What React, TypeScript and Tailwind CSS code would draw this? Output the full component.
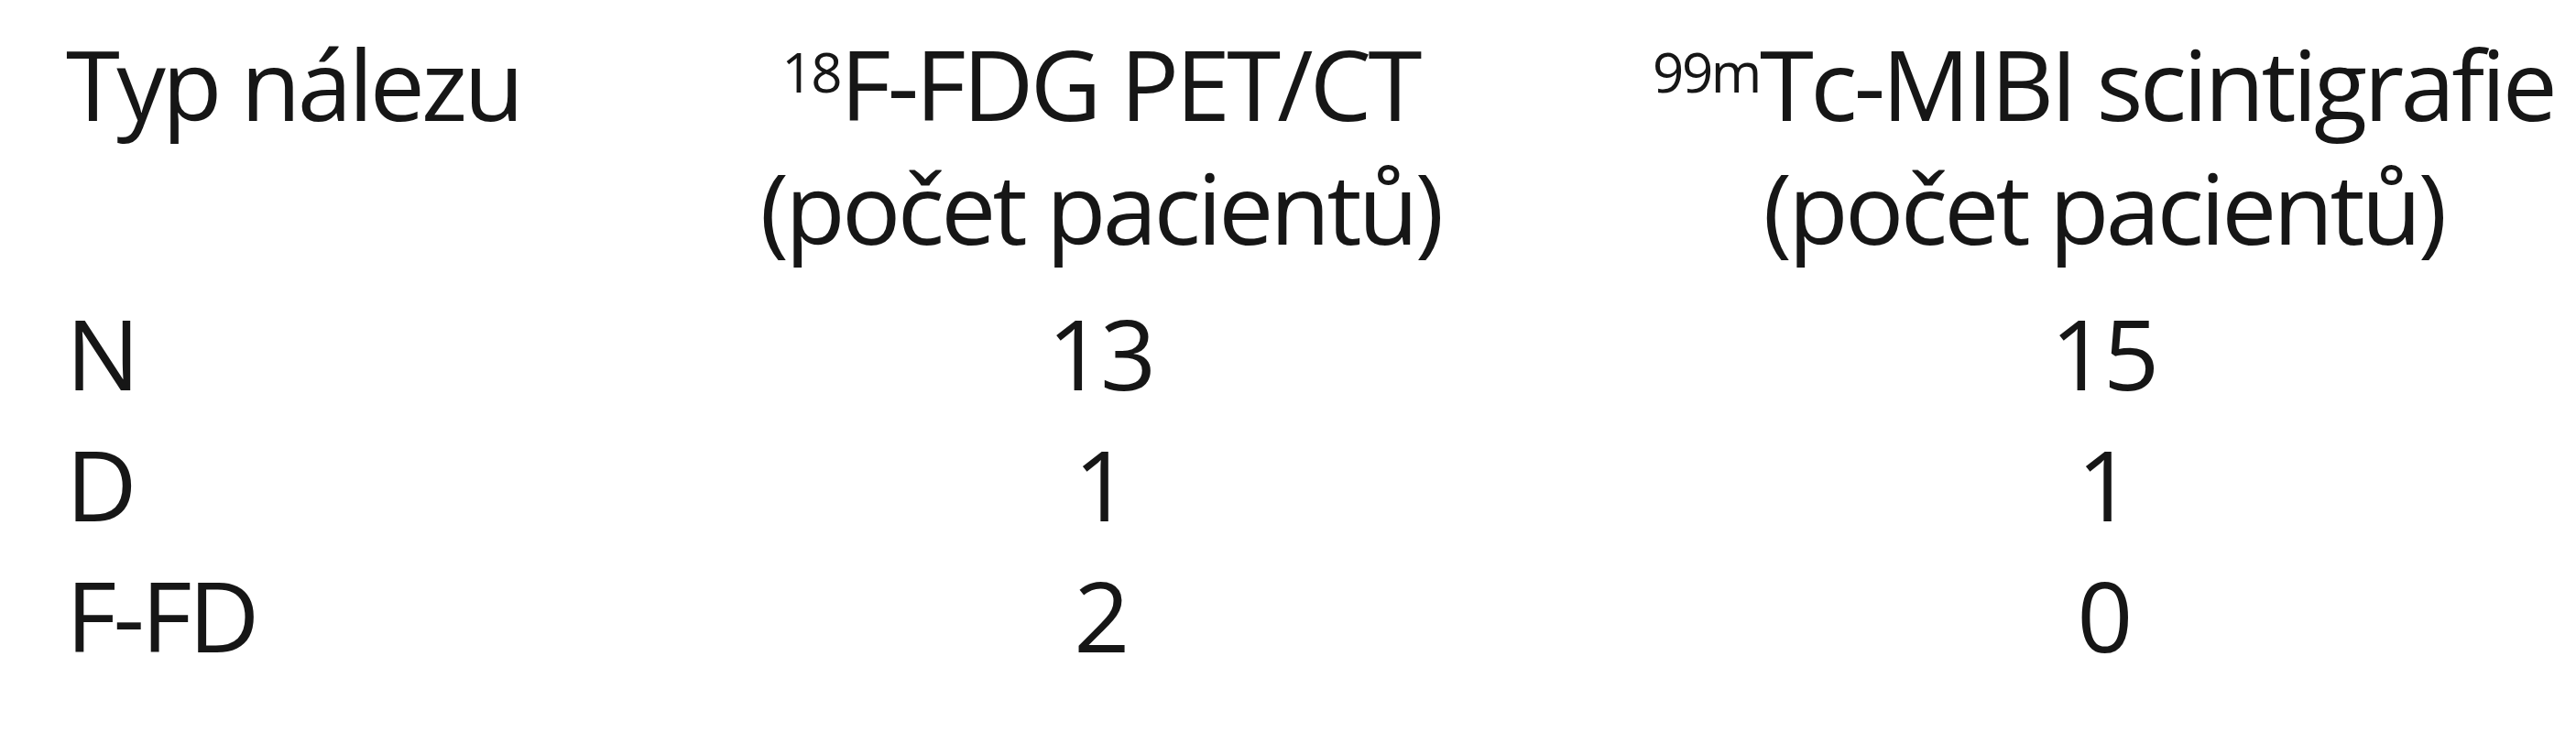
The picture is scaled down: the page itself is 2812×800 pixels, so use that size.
type Row = {
  label: string
  pet: string
  mibi: string
}

const rows: Row[] = [
  { label: 'N', pet: '13', mibi: '15' },
  { label: 'D', pet: '1', mibi: '1' },
  { label: 'F-FD', pet: '2', mibi: '0' },
]

const Sup = ({ children }: { children: string }) => (
  <span className="align-[31px] text-[60px] leading-none tracking-[-0.04em]">{children}</span>
)

export default function App() {
  return (
    <div className="h-[800px] w-[2812px] overflow-hidden bg-white font-['Open_Sans',sans-serif] text-[107px] tracking-[-0.035em] text-[#161616]">
      <div className="grid grid-cols-[544px_790px_1020px] gap-x-[190px] pl-[72px] pt-[23px]">
        <div className="leading-[135px]">Typ nálezu</div>
        <div className="text-center leading-[135px]">
          <div className="whitespace-nowrap">
            <Sup>18</Sup>F-FDG PET/CT
          </div>
          <div className="whitespace-nowrap">(počet pacientů)</div>
        </div>
        <div className="text-center leading-[135px]">
          <div className="whitespace-nowrap">
            <Sup>99m</Sup>Tc-MIBI scintigrafie
          </div>
          <div className="whitespace-nowrap">(počet pacientů)</div>
        </div>
      </div>

      <div className="mt-[20px] flex flex-col">
        {rows.map((row) => (
          <div
            key={row.label}
            className="grid grid-cols-[544px_790px_1020px] gap-x-[190px] pl-[72px] leading-[143px]"
          >
            <div>{row.label}</div>
            <div className="text-center">{row.pet}</div>
            <div className="text-center">{row.mibi}</div>
          </div>
        ))}
      </div>
    </div>
  )
}
